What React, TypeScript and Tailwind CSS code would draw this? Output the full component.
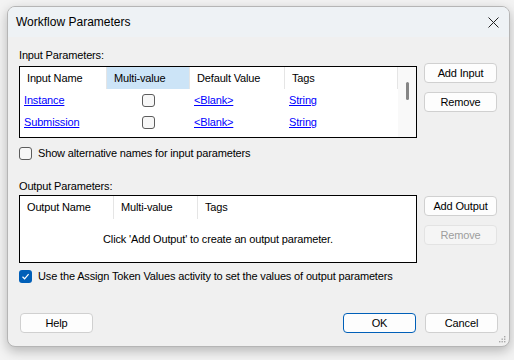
import React from "react";

function Box({ checked }: { checked?: boolean }) {
  if (checked) {
    return (
      <span className="flex items-center justify-center w-[13px] h-[13px] rounded-[3px] bg-[#005fb8]">
        <svg width="9" height="9" viewBox="0 0 9 9">
          <path d="M1.5 4.8 L3.6 6.8 L7.6 2.2" stroke="#fff" strokeWidth="1.2" fill="none" />
        </svg>
      </span>
    );
  }
  return <span className="block w-[13px] h-[13px] rounded-[3px] border border-[#5c5c5c] bg-[#f7f7f7]" />;
}

function Btn({ label, primary, disabled }: { label: string; primary?: boolean; disabled?: boolean }) {
  return (
    <button
      type="button"
      className={
        disabled
          ? "w-[73px] h-[20px] rounded-[4px] border border-[#e3e3e3] bg-[#f5f5f5] text-[#9d9d9d]"
          : primary
          ? "w-[73px] h-[20px] rounded-[4px] border border-[#005fb8] bg-[#fdfdfd] text-black"
          : "w-[73px] h-[20px] rounded-[4px] border border-[#d0d0d0] bg-[#fdfdfd] text-black"
      }
    >
      {label}
    </button>
  );
}

const link = "text-[#0000ff] underline";

export default function App() {
  return (
    <div
      className="w-[514px] h-[360px] bg-[#f3f3f3] pl-[7px] pt-[6px] text-[11px] tracking-[-0.15px] leading-[15px] text-black"
      style={{ fontFamily: '"Liberation Sans", Arial, sans-serif' }}
    >
      <div className="relative w-[503px] h-[341px] rounded-[8px] border border-[#b5b5b5] bg-[#f0f0f0] shadow-[0_4px_12px_rgba(0,0,0,0.25)] overflow-hidden">
        {/* title bar */}
        <div className="flex items-center justify-between h-[30px] pl-[8px] pr-[10px] pt-[1px] bg-[#eef2f5]">
          <span className="text-[12px] tracking-normal">Workflow Parameters</span>
          <svg width="11" height="11" viewBox="0 0 11 11">
            <path d="M0.5 0.5 L10.5 10.5 M10.5 0.5 L0.5 10.5" stroke="#222" strokeWidth="1" />
          </svg>
        </div>

        <div className="pl-[11px] pt-[11px]">
          {/* input params */}
          <div className="flex gap-[7px]">
            <div className="w-[398px]">
              <div className="h-[15px]">Input Parameters:</div>
              <div className="mt-[3px] h-[72px] border border-black bg-white flex overflow-hidden">
                <div className="flex-1">
                  <div className="flex h-[22px]">
                    <div className="w-[87px] pl-[7px] flex items-center border-r border-[#e5e5e5]">Input Name</div>
                    <div className="w-[83px] pl-[7px] flex items-center bg-[#cce4f7] border-r border-[#e5e5e5]">Multi-value</div>
                    <div className="w-[95px] pl-[7px] flex items-center border-r border-[#e5e5e5]">Default Value</div>
                    <div className="flex-1 pl-[7px] flex items-center border-r border-[#e5e5e5]">Tags</div>
                  </div>
                  {["Instance", "Submission", ""].map((n, i) => (
                    <div key={i} className="flex h-[22px] items-center">
                      <div className="w-[87px] pl-[4px]">
                        <span className={link}>{n}</span>
                      </div>
                      <div className="w-[83px] flex justify-center">
                        <Box />
                      </div>
                      <div className="w-[95px] pl-[4px]">
                        {n && <span className={link}>&lt;Blank&gt;</span>}
                      </div>
                      <div className="flex-1 pl-[4px]">{n && <span className={link}>String</span>}</div>
                    </div>
                  ))}
                </div>
                <div className="w-[18px] bg-[#f9f9f9] flex justify-center pt-[15px]">
                  <span className="block w-[3px] h-[18px] rounded-[2px] bg-[#858585]" />
                </div>
              </div>
            </div>
            <div className="flex flex-col gap-[9px] pt-[15px]">
              <Btn label="Add Input" />
              <Btn label="Remove" />
            </div>
          </div>

          <div className="flex items-center gap-[6px] mt-[9px] h-[13px]">
            <Box />
            <span>Show alternative names for input parameters</span>
          </div>

          {/* output params */}
          <div className="flex gap-[7px] mt-[19px]">
            <div className="w-[398px]">
              <div className="h-[15px]">Output Parameters:</div>
              <div className="mt-[1px] h-[68px] border border-black bg-white flex flex-col">
                <div className="flex h-[23px]">
                  <div className="w-[94px] pl-[7px] flex items-center border-r border-[#e5e5e5]">Output Name</div>
                  <div className="w-[84px] pl-[7px] flex items-center border-r border-[#e5e5e5]">Multi-value</div>
                  <div className="flex-1 pl-[7px] flex items-center">Tags</div>
                </div>
                <div className="flex-1 flex items-center justify-center pb-[2px]">
                  Click 'Add Output' to create an output parameter.
                </div>
              </div>
            </div>
            <div className="flex flex-col gap-[9px] pt-[17px]">
              <Btn label="Add Output" />
              <Btn label="Remove" disabled />
            </div>
          </div>

          <div className="flex items-center gap-[6px] mt-[7px] h-[13px]">
            <Box checked />
            <span>Use the Assign Token Values activity to set the values of output parameters</span>
          </div>

          {/* footer */}
          <div className="flex mt-[30px] w-[479px] pl-[1px]">
            <Btn label="Help" />
            <div className="flex-1" />
            <div className="flex gap-[9px]">
              <Btn label="OK" primary />
              <Btn label="Cancel" />
            </div>
          </div>
        </div>

        <svg className="absolute right-[3px] bottom-[3px]" width="7" height="7" viewBox="0 0 7 7">
          <g fill="#a8a8a8">
            <rect x="5" y="0" width="1.4" height="1.4" />
            <rect x="2.5" y="2.5" width="1.4" height="1.4" />
            <rect x="5" y="2.5" width="1.4" height="1.4" />
            <rect x="0" y="5" width="1.4" height="1.4" />
            <rect x="2.5" y="5" width="1.4" height="1.4" />
            <rect x="5" y="5" width="1.4" height="1.4" />
          </g>
        </svg>
      </div>
    </div>
  );
}
